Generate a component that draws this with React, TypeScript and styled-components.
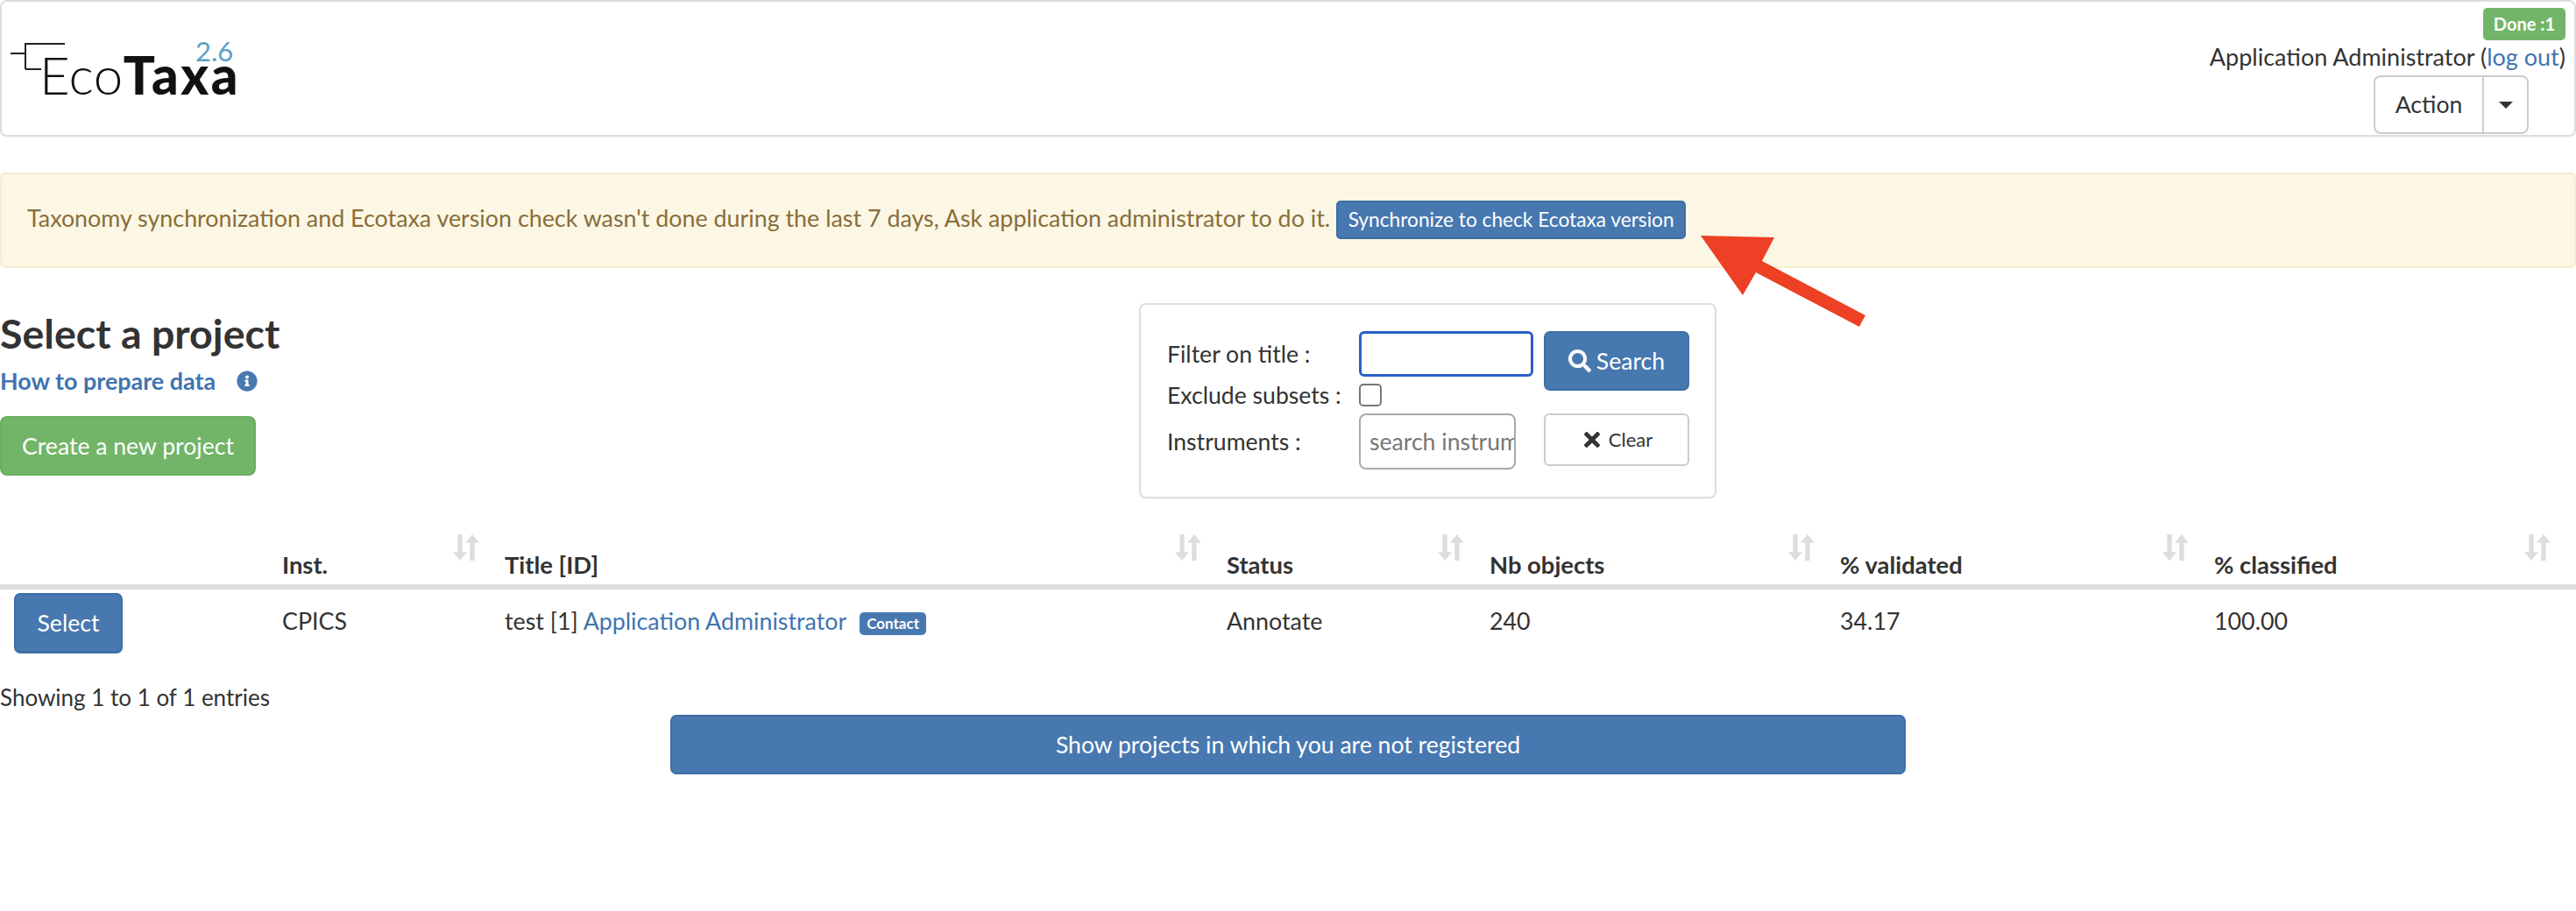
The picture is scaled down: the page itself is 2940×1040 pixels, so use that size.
import React from "react";
import styled, { createGlobalStyle } from "styled-components";
import { FaSearch, FaTimes, FaInfoCircle } from "react-icons/fa";

const Global = createGlobalStyle`
  html, body { margin: 0; padding: 0; background: #fff; }
  body { font-family: "Lato", "Noto Sans", sans-serif; font-size: 26.6px; line-height: 1.3; color: #333; }
  * { box-sizing: border-box; }
`;
const BLUE = "#4878b0";
const Page = styled.div`position: relative; width: 2940px; height: 1040px; overflow: hidden;`;
const Header = styled.header`
  display: flex; justify-content: space-between; height: 156px;
  border: 2px solid #ddd; border-radius: 8px; padding: 7px 10px 0 10px;
  box-shadow: 0 1px 2px rgba(0,0,0,.05);
`;
const Logo = styled.div`position: relative; width: 300px; padding: 46px 0 0 33px; font-size: 60px; line-height: 60px; color: #111; white-space: nowrap;`;
const LogoTree = styled.svg`position: absolute; left: 0; top: 0;`;
const Eco = styled.span`font-weight: 300; letter-spacing: 0.5px;`;
const Taxa = styled.span`font-weight: 900; letter-spacing: 2.5px;`;
const LogoVersion = styled.span`position: absolute; left: 211px; top: 34px; font-size: 31px; line-height: 30px; color: #5ba0c4;`;
const UserArea = styled.div`display: flex; flex-direction: column; align-items: flex-end;`;
const Badge = styled.span`
  display: inline-block; background: #72b568; color: #fff; font-weight: 700; font-size: 20px;
  line-height: 37px; height: 37px; padding: 0 12px; border-radius: 5px;
`;
const UserLine = styled.div`height: 38px; line-height: 38px; margin-top: 0; white-space: nowrap; font-size: 27px;`;
const A = styled.a`color: #4074b0; text-decoration: none;`;
const SplitBtn = styled.div`
  display: flex; height: 67px; margin-top: 2px; margin-right: 42px; border: 2px solid #ccc; border-radius: 8px; background: #fff;
`;
const ActionLabel = styled.div`width: 124px; text-align: center; line-height: 63px; border-right: 2px solid #ccc;`;
const CaretBox = styled.div`width: 49px; display: flex; align-items: center; justify-content: center;`;
const Caret = styled.i`border-top: 8px solid #333; border-left: 8px solid transparent; border-right: 8px solid transparent;`;

const Alert = styled.div`
  display: flex; align-items: center; gap: 7px; height: 109px; margin-top: 41px; padding: 0 0 4px 29px;
  background: #fbf7e4; border: 2px solid #f9ecd0; border-radius: 6px; color: #8a6d3b; white-space: nowrap; font-size: 26.85px;
`;
const SmallBtn = styled.button`
  font: inherit; font-size: 22.7px; color: #fff; background: ${BLUE}; border: 2px solid #3f6ea5; border-radius: 5px;
  height: 44px; padding: 0; width: 399px; margin-top: 2px;
`;
const Top = styled.section`display: grid; grid-template-columns: 1300px 659px; margin-top: 40px;`;
const Left = styled.div`padding-top: 6px;`;
const Title = styled.h1`margin: 0; font-size: 46.6px; line-height: 56px; font-weight: 700; color: #333;`;
const HowTo = styled.div`display: flex; align-items: center; margin-top: 8px; height: 38px; gap: 24px; font-weight: 700; font-size: 26.9px;`;
const Info = styled(FaInfoCircle)`color: ${BLUE}; font-size: 24px;`;
const Create = styled.button`
  display: block; width: 292px; height: 68px; margin-top: 21px; font: inherit; color: #fff; background: #72b568;
  border: 2px solid #69ad5f; border-radius: 8px; padding: 0;
`;
const FilterBox = styled.div`
  display: grid; grid-template-columns: 219px 211px 166px; grid-template-rows: 52px 26px 64px; row-gap: 8px;
  height: 223px; padding: 30px 0 0 30px; border: 2px solid #ddd; border-radius: 8px;
  box-shadow: 0 1px 2px rgba(0,0,0,.05); align-items: center;
`;
const FocusInput = styled.input`width: 199px; height: 52px; border: 3px solid #2a5fc9; border-radius: 6px; outline: none;`;
const SearchBtn = styled.button`
  grid-row: 1 / span 2; grid-column: 3; align-self: start; height: 68px; font: inherit; color: #fff; background: ${BLUE};
  border: 2px solid #3f6ea5; border-radius: 7px; padding: 0; display: flex; align-items: center; justify-content: center; gap: 6px;
`;
const Check = styled.input`appearance: none; width: 26px; height: 26px; margin: 0; border: 2px solid #767676; border-radius: 5px; background: #fff;`;
const InstInput = styled.input`
  width: 179px; height: 64px; font: inherit; padding: 0 0 0 10px; border: 2px solid #aaa; border-radius: 8px; color: #777;
  &::placeholder { color: #777; opacity: 1; }
`;
const ClearBtn = styled.button`
  align-self: start; height: 60px; font: inherit; font-size: 22px; color: #333; background: #fff; border: 2px solid #ccc; border-radius: 6px;
  padding: 0; display: flex; align-items: center; justify-content: center; gap: 6px;
`;
const Table = styled.table`width: 2940px; margin-top: 25px; border-collapse: collapse; table-layout: fixed;`;
const Th = styled.th`
  position: relative; height: 76px; padding: 0 0 4px 0; text-align: left; vertical-align: bottom; font-weight: 700; font-size: 27.4px;
  border-bottom: 6px solid #ddd;
`;
const SortIcon = styled.svg`position: absolute; right: 29px; top: 15px;`;
const Td = styled.td`padding: 19px 0 0 0; vertical-align: top; height: 82px; font-size: 26.8px;`;
const SelectBtn = styled.button`
  font: inherit; font-size: 26.6px; color: #fff; background: ${BLUE}; border: 2px solid #3f6ea5; border-bottom-width: 3px; border-radius: 7px;
  width: 124px; height: 69px; margin: -15px 0 0 16px; padding: 0; display: block;
`;
const Tag = styled.span`
  display: inline-block; margin-left: 15px; background: ${BLUE}; color: #fff; font-size: 17px; font-weight: 700;
  line-height: 26px; padding: 0 8px; border-radius: 5px; vertical-align: 1px;
`;
const Showing = styled.div`height: 34px; line-height: 34px; margin-top: 27px; font-size: 26px;`;
const Wide = styled.button`
  display: block; width: 1410px; height: 68px; margin: 3px 0 0 765px; font: inherit; color: #fff; background: ${BLUE};
  border: 2px solid #3f6ea5; border-radius: 7px; padding: 0;
`;
const Arrow = styled.svg`position: absolute; left: 1930px; top: 260px;`;

const Sort = () => (
  <SortIcon width="30" height="32" viewBox="0 0 28 30" fill="#ddd">
    <path d="M5 1h5v19h5l-7.5 9L0 20h5z" />
    <path d="M18 29h5V10h5L20.500 1 13 10h5z" />
  </SortIcon>
);

const cols: [string, number][] = [["", 322], ["Inst.", 254], ["Title [ID]", 824], ["Status", 300], ["Nb objects", 400], ["% validated", 427], ["% classified", 413]];

export default function App() {
  return (
    <Page>
      <Global />
      <Header>
        <Logo>
          <LogoTree width="90" height="90" viewBox="0 0 90 90" fill="none" stroke="#222" strokeWidth="2">
            <path d="M0 52h16M17 40v30M16 41h46M17 70h18" />
          </LogoTree>
          <Eco>Eco</Eco><Taxa>Taxa</Taxa>
          <LogoVersion>2.6</LogoVersion>
        </Logo>
        <UserArea>
          <Badge>Done :1</Badge>
          <UserLine>Application Administrator (<A href="#">log out</A>)</UserLine>
          <SplitBtn>
            <ActionLabel>Action</ActionLabel>
            <CaretBox><Caret /></CaretBox>
          </SplitBtn>
        </UserArea>
      </Header>
      <Alert>
        Taxonomy synchronization and Ecotaxa version check wasn't done during the last 7 days, Ask application administrator to do it.
        <SmallBtn>Synchronize to check Ecotaxa version</SmallBtn>
      </Alert>
      <Top>
        <Left>
          <Title>Select a project</Title>
          <HowTo><A href="#">How to prepare data</A><Info /></HowTo>
          <Create>Create a new project</Create>
        </Left>
        <FilterBox>
          <span>Filter on title :</span>
          <FocusInput />
          <SearchBtn><FaSearch size={26} />Search</SearchBtn>
          <span>Exclude subsets :</span>
          <Check type="checkbox" />
          <span>Instruments :</span>
          <InstInput placeholder="search instruments" />
          <ClearBtn><FaTimes size={26} />Clear</ClearBtn>
        </FilterBox>
      </Top>
      <Table>
        <colgroup>{cols.map(([n, w]) => <col key={n} width={w} />)}</colgroup>
        <thead>
          <tr>{cols.map(([n]) => <Th key={n}>{n}{n && <Sort />}</Th>)}</tr>
        </thead>
        <tbody>
          <tr>
            <Td><SelectBtn>Select</SelectBtn></Td>
            <Td>CPICS</Td>
            <Td>test [1] <A href="#">Application Administrator</A><Tag>Contact</Tag></Td>
            <Td>Annotate</Td>
            <Td>240</Td>
            <Td>34.17</Td>
            <Td>100.00</Td>
          </tr>
        </tbody>
      </Table>
      <Showing>Showing 1 to 1 of 1 entries</Showing>
      <Wide>Show projects in which you are not registered</Wide>
      <Arrow width="210" height="120" viewBox="1930 260 210 120" fill="#ee4024">
        <path d="M1941 269L2025 271L2011 298L2129 360L2122 373L2004 311L1989 337Z" />
      </Arrow>
    </Page>
  );
}
